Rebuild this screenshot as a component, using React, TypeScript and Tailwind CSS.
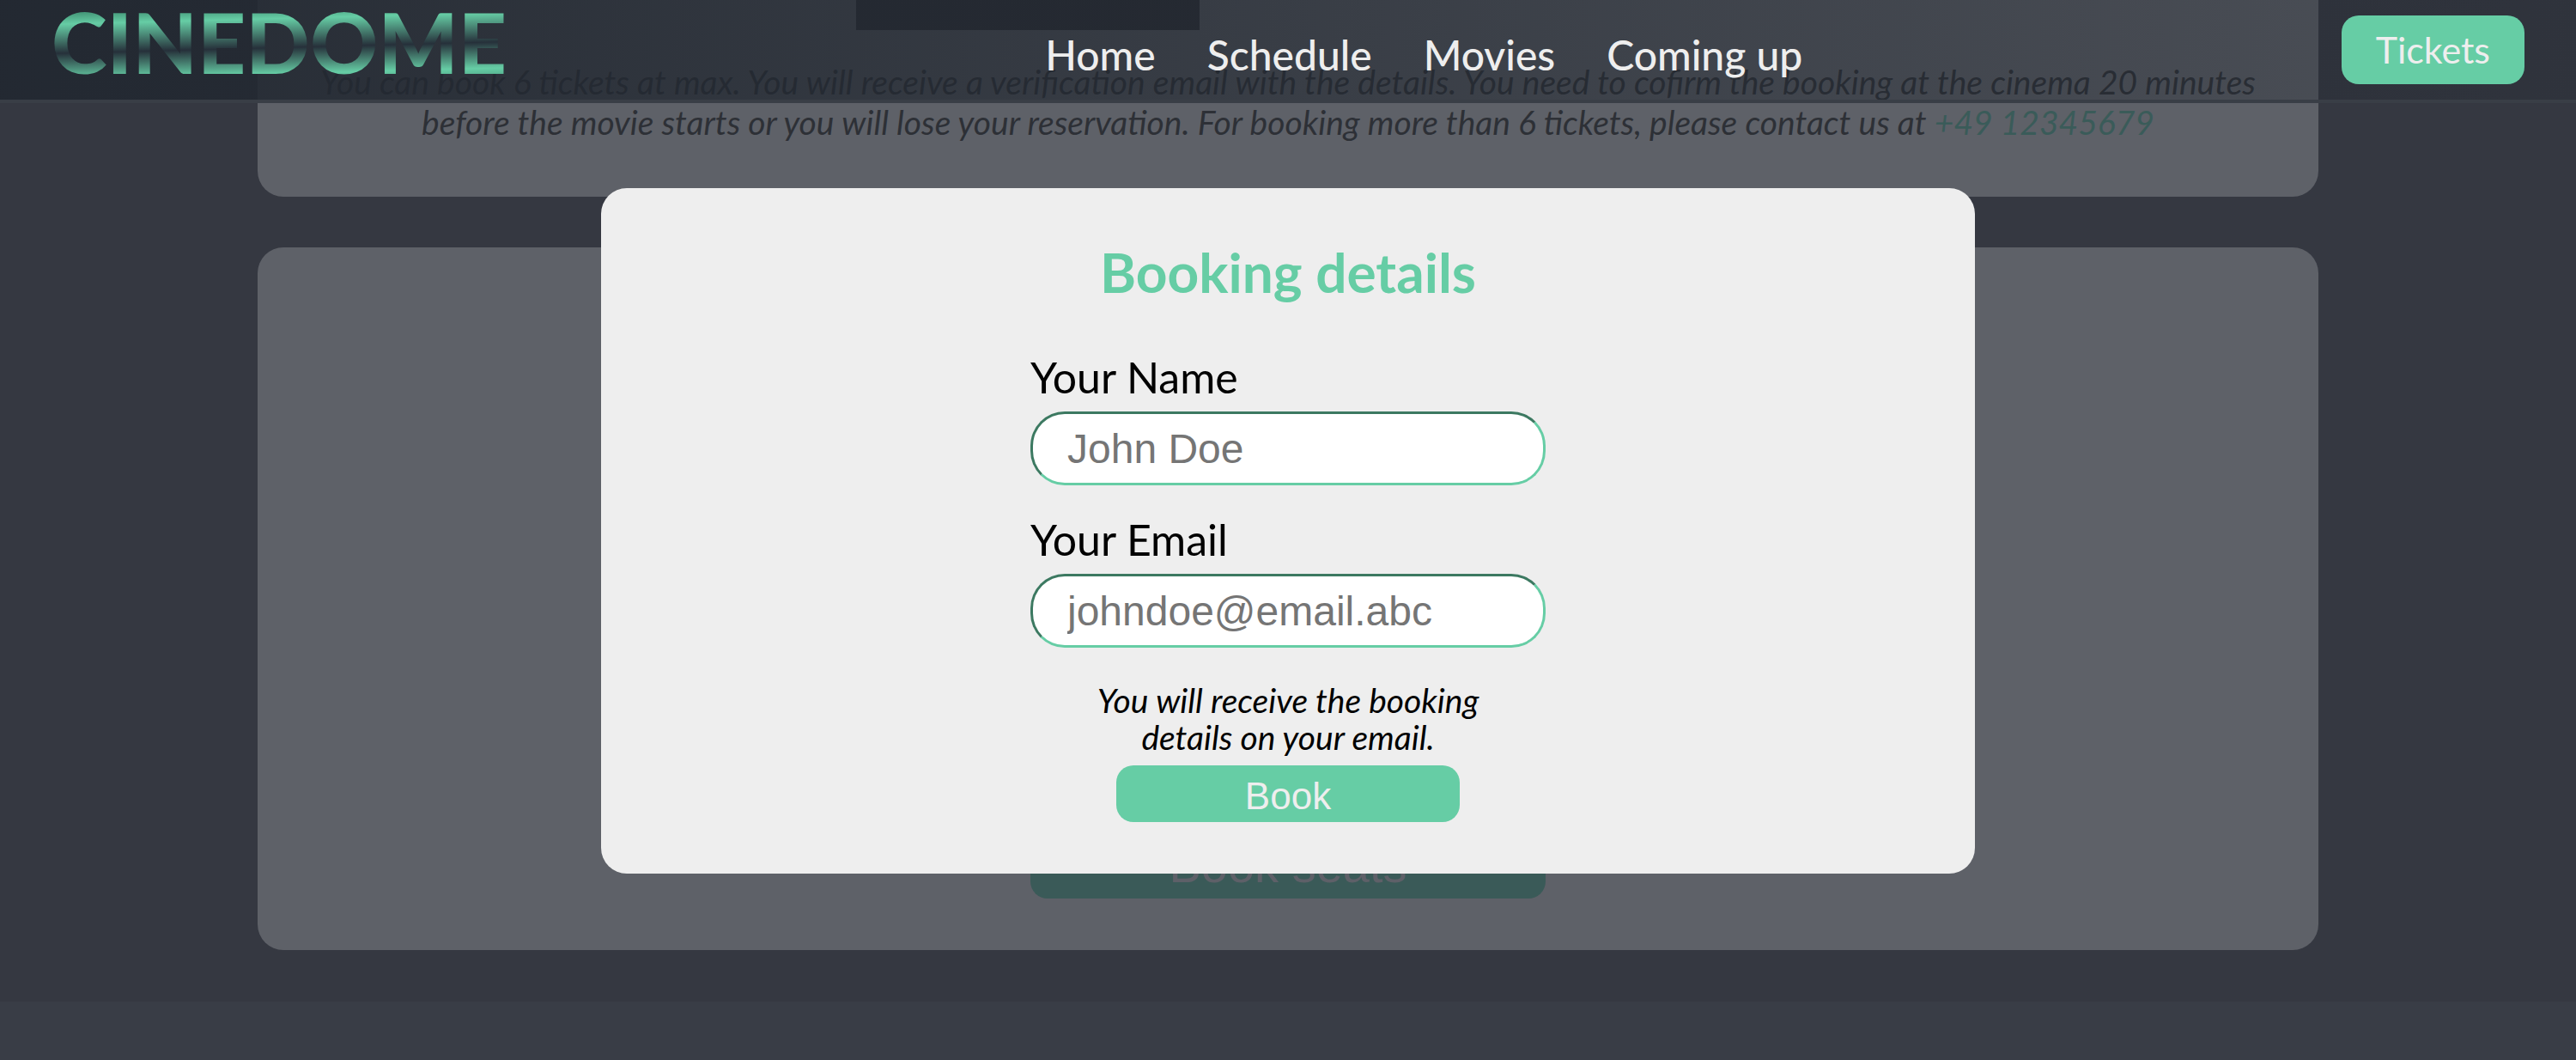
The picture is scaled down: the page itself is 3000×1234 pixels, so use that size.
import React from "react";

const navItems = ["Home", "Schedule", "Movies", "Coming up"];

function Header() {
  return (
    <header className="absolute inset-x-0 top-0 z-20 flex h-30 items-center justify-between border-b-4 border-[#393e46] bg-linear-to-r from-[#222831]/95 to-[#222831]/30 px-15">
      <a
        href="#top"
        className="bg-[linear-gradient(178.5deg,#3f8f72_9%,#66cda5_21%,#26303a_48%,#66cda5_72%,#4fa586_82%)] bg-clip-text pb-5 font-['Lato'] text-[98px] leading-[92px] font-black text-transparent"
      >
        CINEDOME
      </a>
      <nav className="flex gap-15 pt-3 text-[48px] leading-[56px] font-medium text-[#eeeeee]">
        {navItems.map((item) => (
          <a key={item} href="#top">
            {item}
          </a>
        ))}
      </nav>
      <button className="h-20 rounded-[20px] bg-[#66cda5] px-10 text-[43px] text-[#eeeeee]">
        Tickets
      </button>
    </header>
  );
}

type FieldProps = { id: string; label: string; type: string; placeholder: string };

function Field({ id, label, type, placeholder }: FieldProps) {
  return (
    <div className="flex flex-col gap-2.5">
      <label htmlFor={id} className="text-[50px] leading-[60px] text-black">
        {label}
      </label>
      <input
        id={id}
        type={type}
        placeholder={placeholder}
        className="h-[86px] w-full rounded-[40px] border-3 border-[#66cda5] bg-white px-10 font-['Liberation_Sans',sans-serif] text-[48px] [border-style:inset] placeholder:text-[#757575]"
      />
    </div>
  );
}

function BookingDialog() {
  return (
    <div className="absolute inset-0 z-10 flex items-center justify-center pt-0.5">
      <form
        role="dialog"
        aria-labelledby="booking-title"
        onSubmit={(e) => e.preventDefault()}
        className="flex w-8/15 flex-col items-center rounded-[30px] bg-[#eeeeee] pt-[58px] pb-15"
      >
        <h2 id="booking-title" className="text-[64px] leading-[80px] font-bold text-[#66cda5]">
          Booking details
        </h2>
        <div className="mt-[52px] flex w-3/8 flex-col gap-[33px]">
          <Field id="name" label="Your Name" type="text" placeholder="John Doe" />
          <Field id="email" label="Your Email" type="email" placeholder="johndoe@email.abc" />
        </div>
        <p className="mt-10 w-[500px] text-center text-[39px] leading-[43px] text-black italic">
          You will receive the booking details on your email.
        </p>
        <button className="mt-[11px] h-[66px] w-1/4 rounded-[20px] bg-[#66cda5] pt-1.5 font-['Liberation_Sans',sans-serif] text-[44px] leading-[50px] text-[#eeeeee]">
          Book
        </button>
      </form>
    </div>
  );
}

export default function App() {
  return (
    <div
      id="top"
      className="relative flex min-h-screen flex-col overflow-hidden bg-[#353841] font-['Lato',sans-serif]"
    >
      <Header />
      <main className="flex flex-col items-center gap-[59px] pb-15">
        <section className="flex w-4/5 flex-col rounded-b-[30px] bg-[#5e6168] px-15 pb-[63px]">
          <div className="ml-[637px] h-[35px] w-[400px] bg-[#2a2c33]" />
          <p className="mt-[37px] text-center text-[39px] leading-[47px] text-[#2d3036] italic">
            You can book 6 tickets at max. You will receive a verification email with the details. You need to
            cofirm the booking at the cinema 20 minutes before the movie starts or you will lose your
            reservation. For booking more than 6 tickets, please contact us at{" "}
            <a href="tel:+4912345679" className="text-[#3a5b59]">
              +49 12345679
            </a>
          </p>
        </section>
        <section className="flex h-[818px] w-4/5 flex-col items-center justify-end rounded-[30px] bg-[#5e6168] pb-15">
          <button className="h-20 w-1/4 rounded-[20px] bg-[#3a5a58] pt-1 font-['Liberation_Sans',sans-serif] text-[56px] leading-[64px] text-[#5e6068]">
            Book seats
          </button>
        </section>
      </main>
      <footer className="flex-1 bg-[#393d46]" />
      <BookingDialog />
    </div>
  );
}
